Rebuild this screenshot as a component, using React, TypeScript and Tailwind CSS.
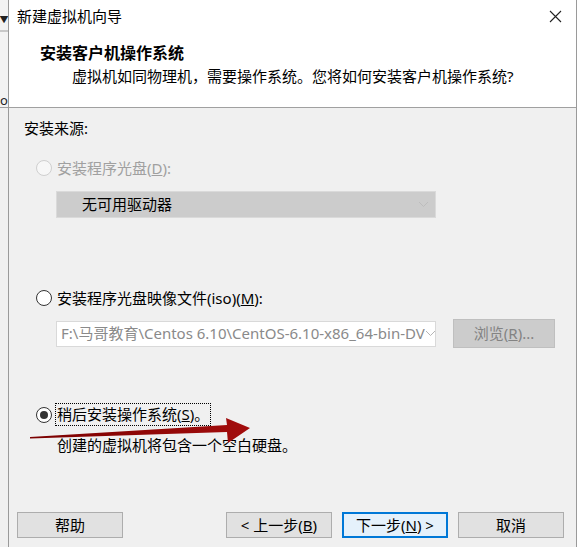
import React from 'react'

const font = {
	fontFamily: '"Noto Sans", "Noto Sans CJK SC", sans-serif',
}

const Radio = ({ checked, disabled }: { checked?: boolean; disabled?: boolean }) => (
	<span
		className={`flex h-[16px] w-[16px] shrink-0 items-center justify-center rounded-full border ${
			disabled ? 'border-[#cfcfcf] bg-[#f7f7f7]' : 'border-[#333333] bg-white'
		}`}>
		{checked && <span className="h-[8px] w-[8px] rounded-full bg-[#333333]" />}
	</span>
)

const Btn = ({ children, focused }: { children: React.ReactNode; focused?: boolean }) => (
	<div
		className={`flex h-[26px] w-[106px] items-center justify-center text-[15px] text-black ${
			focused ? 'border-2 border-[#0078d7] bg-[#e5f1fb]' : 'border border-[#adadad] bg-[#e1e1e1]'
		}`}>
		{children}
	</div>
)

const Chevron = ({ color }: { color: string }) => (
	<svg width="11" height="7" viewBox="0 0 11 7" className="shrink-0">
		<path d="M1 1 L5.5 5.5 L10 1" fill="none" stroke={color} strokeWidth="1" />
	</svg>
)

export default function App() {
	return (
		<div className="flex h-[547px] w-[577px] overflow-hidden bg-white leading-none" style={font}>
			{/* sliver of window behind */}
			<div className="flex w-[8px] shrink-0 flex-col bg-[#f3f3f3]">
				<div className="flex h-[32px] items-end justify-center border-b-2 border-[#c8c8c8] pb-[6px]">
					<span className="text-[9px] text-[#222]">▼</span>
				</div>
				<div className="h-[62px]" />
				<div className="h-[14px] border-b border-[#a0a0a0] text-[13px] text-[#222]">o</div>
				<div className="flex-1 bg-[#f0f0f0]" />
			</div>

			<div className="flex flex-1 flex-col border-l border-r border-[#9a9a9a]">
				{/* header */}
				<div className="flex h-[108px] shrink-0 flex-col border-b border-[#a0a0a0] bg-white">
					<div className="flex h-[32px] items-center justify-between pl-[8px] pr-[14px]">
						<span className="text-[15px] text-black">新建虚拟机向导</span>
						<svg width="13" height="13" viewBox="0 0 13 13">
							<path d="M1 1 L12 12 M12 1 L1 12" stroke="#222" strokeWidth="1.1" />
						</svg>
					</div>
					<div className="mt-[13px] pl-[31px] text-[16px] font-bold text-black">安装客户机操作系统</div>
					<div className="mt-[8px] pl-[63px] text-[15px] text-black">
						虚拟机如同物理机，需要操作系统。您将如何安装客户机操作系统?
					</div>
				</div>

				{/* body */}
				<div className="relative flex flex-1 flex-col bg-[#f0f0f0] text-[15px]">
					<div className="mt-[13px] pl-[15px] text-black">安装来源:</div>

					<div className="mt-[24px] flex items-center gap-[5px] pl-[27px] text-[#a0a0a0]">
						<Radio disabled />
						<span>
							安装程序光盘(<u>D</u>):
						</span>
					</div>

					<div className="ml-[47px] mt-[15px] flex h-[27px] w-[380px] items-center justify-between border border-[#dadada] bg-[#cccccc] pl-[25px] pr-[6px]">
						<span className="text-black">无可用驱动器</span>
						<Chevron color="#bdbdbd" />
					</div>

					<div className="mt-[72px] flex items-center gap-[5px] pl-[27px] text-black">
						<Radio />
						<span>
							安装程序光盘映像文件(iso)(<u>M</u>):
						</span>
					</div>

					<div className="mt-[13px] flex items-center gap-[17px] pl-[47px]">
						<div className="flex h-[26px] w-[380px] items-center justify-between overflow-hidden border border-[#d9d9d9] bg-white pl-[4px] pr-[6px]">
							<span className="whitespace-nowrap text-[#8a8a8a]">F:\马哥教育\Centos 6.10\CentOS-6.10-x86_64-bin-DV</span>
							<Chevron color="#b5b5b5" />
						</div>
						<div className="flex h-[29px] w-[102px] items-center justify-center border border-[#bfbfbf] bg-[#cccccc] text-[#838383]">
							浏览(<u>R</u>)...
						</div>
					</div>

					<div className="mt-[55px] flex items-center gap-[3px] pl-[27px] text-black">
						<Radio checked />
						<span className="border border-dotted border-black px-[1px] py-[3px]">
							稍后安装操作系统(<u>S</u>)。
						</span>
					</div>

					<div className="mt-[12px] pl-[48px] text-black">创建的虚拟机将包含一个空白硬盘。</div>

					<div className="mt-auto mb-[9px] flex items-center pl-[8px] pr-[12px]">
						<Btn>帮助</Btn>
						<div className="flex-1" />
						<div className="flex gap-[10px]">
							<Btn>
								&lt; 上一步(<u>B</u>)
							</Btn>
							<Btn focused>
								下一步(<u>N</u>) &gt;
							</Btn>
							<Btn>取消</Btn>
						</div>
					</div>

					{/* red annotation arrow */}
					<svg className="pointer-events-none absolute left-[12px] top-[304px]" width="250" height="40" viewBox="0 0 250 40">
						<defs>
							<linearGradient id="ar" x1="0" x2="1" y1="0" y2="0">
								<stop offset="0" stopColor="#7a0000" />
								<stop offset="1" stopColor="#a30d0d" />
							</linearGradient>
						</defs>
						<polygon points="9,25 206,13 205,6 229,16 207,31 206,20 9,26.5" fill="url(#ar)" />
					</svg>
				</div>
			</div>
		</div>
	)
}
